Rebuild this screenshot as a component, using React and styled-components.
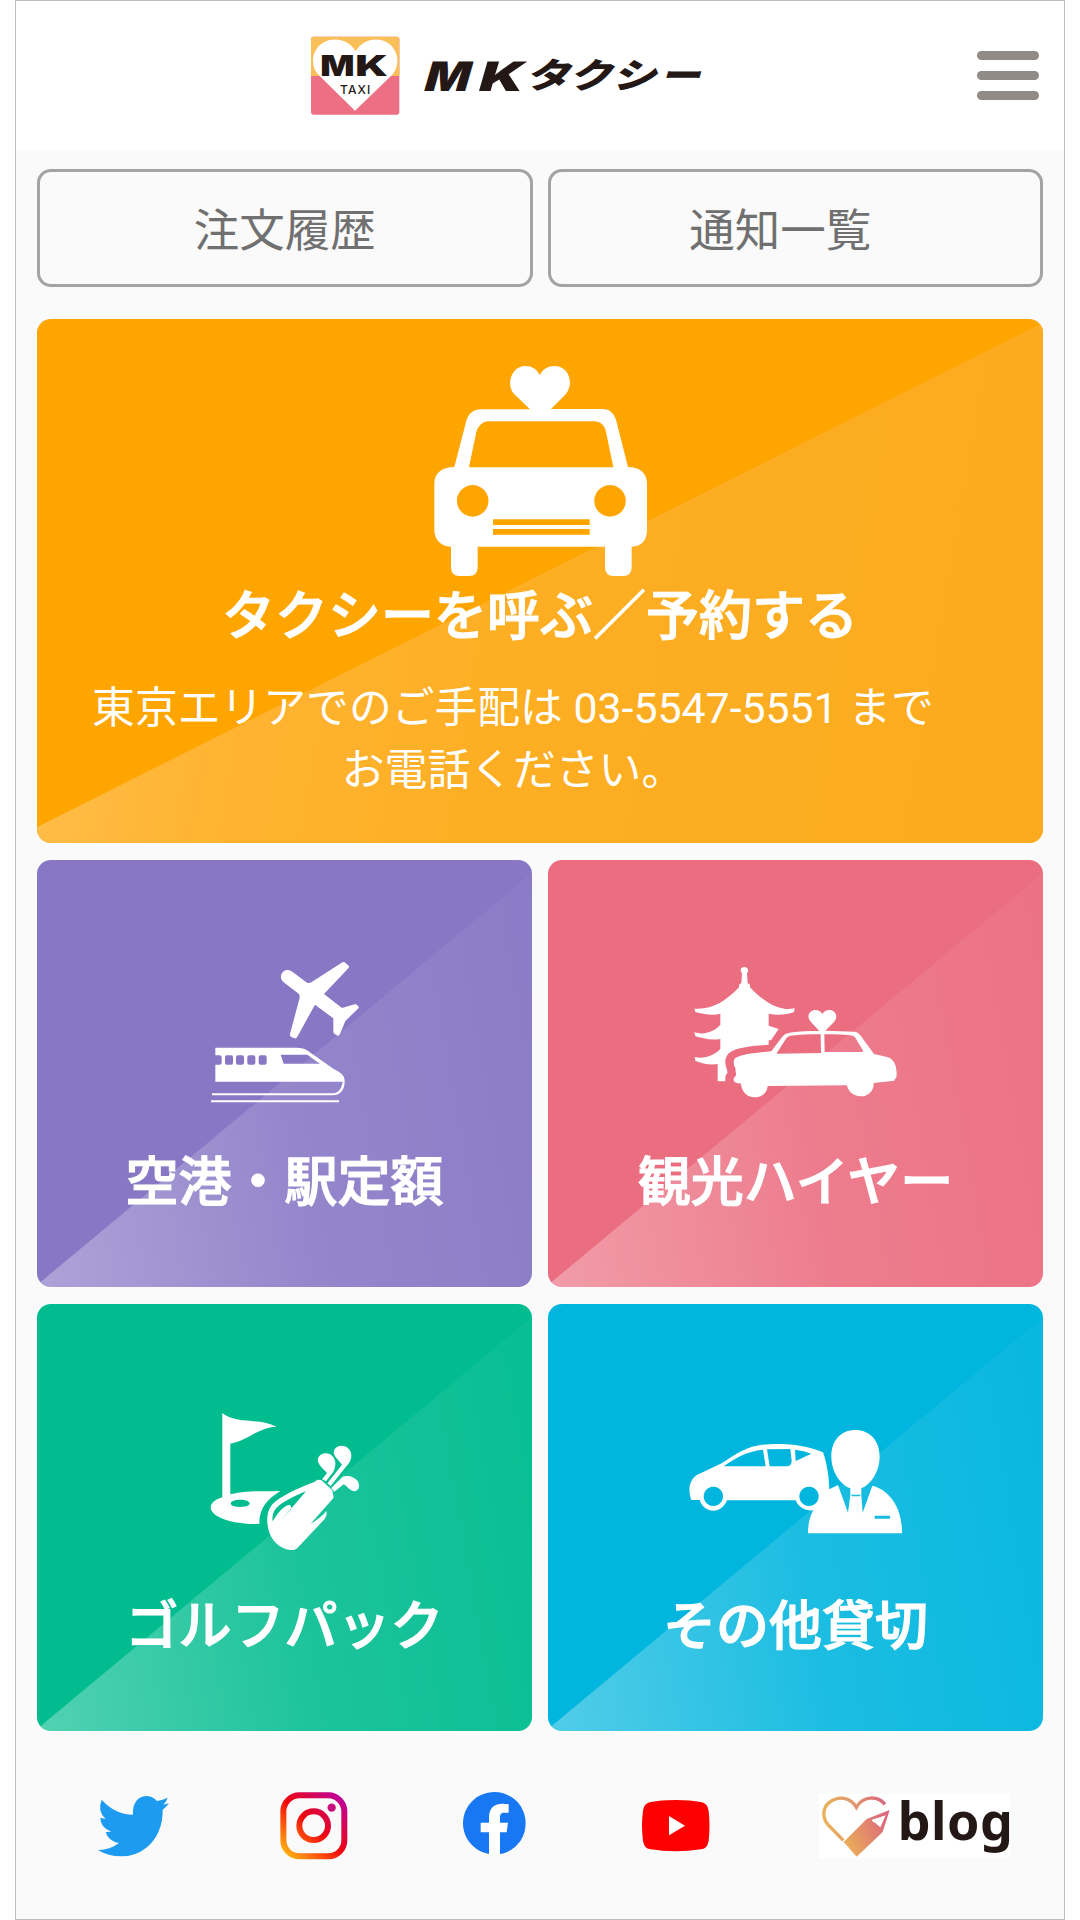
import React from 'react';
import styled, { createGlobalStyle } from 'styled-components';

const GlobalStyle = createGlobalStyle`
  * { box-sizing: border-box; }
  body {
    margin: 0;
    background: #fff;
    font-family: Roboto, "Noto Sans CJK JP", sans-serif;
  }
`;

const Screen = styled.div`
  width: 1050px;
  height: 1920px;
  margin-left: 15px;
  border: 1px solid #bdbdbd;
  background: #fafafa;
`;

const Header = styled.header`
  display: flex;
  align-items: center;
  height: 149px;
  padding: 0 25px 0 295px;
  background: #fff;
`;

const LogoLink = styled.a`
  display: flex;
  margin-right: auto;
`;

const MenuButton = styled.button`
  display: flex;
  flex-direction: column;
  gap: 11px;
  width: 62px;
  padding: 0;
  border: 0;
  background: none;
`;

const MenuBar = styled.span`
  height: 9px;
  border-radius: 5px;
  background: #918b88;
`;

const Shortcuts = styled.nav`
  display: grid;
  grid-template-columns: 1fr 1fr;
  gap: 15px;
  padding: 19px 21px 0;
`;

const ShortcutButton = styled.button`
  height: 118px;
  padding: 0 ${(p) => p.$inset || 0}px 3px 0;
  border: 3px solid #a3a3a3;
  border-radius: 14px;
  background: transparent;
  color: #707070;
  font-family: inherit;
  font-size: 45.5px;
  font-weight: 400;
`;

const Services = styled.main`
  display: grid;
  grid-template-columns: 1fr 1fr;
  gap: 17px 16px;
  padding: 32px 21px 0;
`;

const Card = styled.section`
  display: flex;
  flex-direction: column;
  align-items: center;
  border-radius: 14px;
  color: #fff;
  background: ${(p) => p.$color};
  isolation: isolate;
  position: relative;
  overflow: hidden;
`;

const FeatureCard = styled(Card)`
  grid-column: 1 / -1;
  height: 524px;
  padding-top: 46px;
`;

const ServiceCard = styled(Card)`
  height: 427px;
  padding-top: ${(p) => p.$top}px;
`;

const Shine = styled.span`
  position: absolute;
  inset: 0;
  z-index: -1;
  background: ${(p) => p.$fill};
  clip-path: polygon(${(p) => p.$edge}, 100% 100%, 0 100%);
`;

const FeatureTitle = styled.h1`
  margin: 1px 0 0;
  font-size: 53px;
  font-weight: 500;
  line-height: 78px;
  -webkit-text-stroke: 1.2px #fff;
`;

const FeatureNote = styled.p`
  width: 900px;
  margin: 21px 54px 0 0;
  font-size: 42.8px;
  line-height: 62px;
  text-align: center;
`;

const IconArea = styled.div`
  display: flex;
  align-items: center;
  justify-content: center;
  height: 185px;
`;

const CardLabel = styled.h2`
  margin: ${(p) => p.$pull}px 0 0;
  font-size: 53px;
  font-weight: 500;
  line-height: 114px;
  -webkit-text-stroke: 1.2px #fff;
`;

const Social = styled.footer`
  display: grid;
  grid-template-columns: 181px 180px 181px 181px 296px;
  align-items: center;
  justify-items: center;
  height: 66px;
  margin: 61px 0 0 27px;
`;

const SocialLink = styled.a`
  display: flex;
  padding-bottom: ${(p) => p.$lift || 0}px;
`;

const BlogLink = styled(SocialLink)`
  background: #fff;
`;

const Svg = styled.svg`
  display: block;
  overflow: visible;
`;

/* All drawings use three user units per pixel. */
function Drawing({ box, children }) {
  const [, , w, h] = box;
  return (
    <Svg viewBox={box.join(' ')} width={w / 3} height={h / 3} fill="#fff">
      {children}
    </Svg>
  );
}

/* Slanted letters of the word mark: character, left edge, baseline, size, drawn width. */
const wordmark = [
  { char: 'M', x: 396, y: 210, size: 122, width: 136, family: 'Inter, sans-serif' },
  { char: 'K', x: 559, y: 210, size: 122, width: 134, family: 'Inter, sans-serif' },
  { char: 'タ', x: 706, y: 203, size: 104, width: 136 },
  { char: 'ク', x: 836, y: 203, size: 104, width: 132 },
  { char: 'シ', x: 966, y: 203, size: 104, width: 134 },
  { char: 'ー', x: 1110, y: 203, size: 104, width: 120 },
];

const Logo = () => (
  <Drawing box={[63, 46, 1180, 238]}>
    <rect x="63" y="48" width="265" height="234" rx="8" fill="#ed6f83" />
    <path d="M63 166V56q0-8 8-8H320q8 0 8 8V166Z" fill="#f9c05a" />
    <path d="M195 270L86 163C60 135 64 88 98 67C132 46 178 58 197 92C216 58 260 46 294 67C326 88 332 135 306 163Z" />
    <g fill="#231815" fontFamily="Inter, sans-serif">
      <text x="91" y="166" fontSize="87" fontWeight="900" textLength="103" lengthAdjust="spacingAndGlyphs">M</text>
      <text x="196" y="166" fontSize="87" fontWeight="900" textLength="98" lengthAdjust="spacingAndGlyphs">K</text>
      <text x="150" y="219" fontSize="36" fontWeight="500" textLength="91">TAXI</text>
      {wordmark.map(({ char, x, y, size, width, family }) => (
        <text
          key={char}
          transform={`translate(${x} ${y}) skewX(-16)`}
          fontSize={size}
          fontWeight="900"
          fontFamily={family || "'Noto Sans CJK JP', sans-serif"}
          textLength={width}
          lengthAdjust="spacingAndGlyphs"
        >
          {char}
        </text>
      ))}
    </g>
  </Drawing>
);

const TaxiIcon = () => (
  <Drawing box={[42, 45, 639, 636]}>
    <path
      fillRule="evenodd"
      d="M330 178L283 133C267 117 266 86 281 66C300 40 345 42 359 76C375 42 420 40 440 66C455 88 452 115 437 133L393 177H548C572 177 583 193 589 213L624 351C660 351 681 370 681 401V540C681 570 665 590 635 590V652Q635 678 609 678H581Q555 678 555 652V590H173V652Q173 678 147 678H119Q93 678 93 652V590C60 590 43 565 43 540V401C43 370 65 351 103 351L138 216C144 193 158 178 184 178ZM147 352H580L558 246C554 225 541 214 522 214H207C188 214 174 228 169 246ZM158 405a47.500 47.500 0 1 0 .1 0ZM570 405a47.500 47.500 0 1 0 .1 0ZM219 508V525H509V508ZM219 537V554H509V537Z"
    />
  </Drawing>
);

const AirportIcon = () => (
  <Drawing box={[63, 67, 444, 422]}>
    <path d="M281 95C292 87 304 93 309 98L351 129Q357 132 364 128L455 69Q462 65 466 69L476 78Q479 82 475 86L402 163L456 205L494 194Q499 193 502 197L506 201Q507 205 503 208L466 244L450 283Q447 290 443 288L433 282Q430 280 430 275V236L375 195L322 291Q318 298 314 296L304 292Q299 290 300 283L328 178Q331 168 326 162L281 128C270 119 270 104 281 95Z" />
    <path
      fillRule="evenodd"
      d="M76 324H320C342 324 354 333 366 342L431 388Q464 402 464 422C465 447 454 467 429 467H66V461H427C445 461 456 445 458 426H76V375H89Q95 375 95 369V353Q95 347 89 347H76ZM272 345L281 372H390L352 345ZM110 347Q105 347 105 353V369Q105 375 110 375H124Q129 375 129 369V353Q129 347 124 347ZM144 347Q138 347 138 353V369Q138 375 144 375H156Q162 375 162 369V353Q162 347 156 347ZM178 347Q172 347 172 353V369Q172 375 178 375H190Q196 375 196 369V353Q196 347 190 347ZM212 347Q206 347 206 353V369Q206 375 212 375H225Q230 375 230 369V353Q230 347 225 347Z"
    />
    <path d="M353 335L405 373L431 391L415 389L348 341Z" />
    <path d="M63 482H447V488H63Z" />
  </Drawing>
);

const SightseeingIcon = () => (
  <Drawing box={[40, 50, 608, 392]}>
    <path d="M184 69C175 58 182 50 191 50C201 50 207 60 199 69L201 98L208 103V111C240 145 275 171 318 177L342 174L340 185C319 193 290 196 264 190V226L294 236L271 270H264V283C225 287 182 289 155 302C133 312 130 336 138 355L141 367C134 373 134 380 134 393H111V341C87 345 63 339 44 331L42 320C70 327 100 316 119 296V266C90 271 62 263 44 258L41 246C70 255 100 244 119 224V190C94 197 64 190 44 185L41 175C94 179 135 153 175 111V103L182 98Z" />
    <path
      fillRule="evenodd"
      d="M416 242L391 215C381 204 381 191 390 184C402 175 419 179 425 191C432 179 450 175 461 185C470 194 468 206 460 215L434 241L520 244Q532 245 539 255L580 311L619 320C639 325 648 344 648 372Q648 384 642 387L641 391L579 398C580 421 564 438 540 438C518 438 501 422 499 405L261 407C260 428 243 441 221 441C200 441 184 426 180 399C165 401 157 394 159 384L164 378Q168 374 165 365L164 352C159 346 157 333 163 324C185 310 232 307 272 303L306 258Q313 249 326 247C358 242 387 242 416 242ZM287 310L421 308L420 252C385 252 355 253 330 256Q322 257 317 264ZM431 252L432 305H543Q549 304 546 299L524 262Q520 256 510 255C484 252 459 251 431 252Z"
    />
  </Drawing>
);

const GolfIcon = () => (
  <Drawing box={[63, 69, 444, 411]}>
    <path
      fillRule="evenodd"
      d="M97 69C140 104 205 82 260 110C204 112 176 151 121 161V313C169 300 220 305 271 303C230 329 208 354 208 402C140 405 62 385 62 352C63 336 80 327 97 322ZM151 329C133 329 122 334 122 340C122 347 133 351 151 351C168 351 179 347 179 340C179 334 168 329 151 329Z"
    />
    <path
      fillRule="evenodd"
      d="M232 397C230 371 238 348 257 334C290 309 336 290 373 276L382 269L394 270L427 301L431 323L362 401C381 391 398 377 409 363Q412 377 404 387L325 471C315 483 304 481 287 477C257 468 233 435 232 397ZM348 304C313 318 266 339 252 364Q247 375 247 394C260 378 273 350 298 344Q305 346 304 357L274 390Z"
    />
    <path d="M396 268L411 249C400 237 379 221 384 205C390 188 415 184 427 198C441 214 437 232 429 247L408 274Z" />
    <path d="M412 280L456 224C443 206 425 194 433 179C441 165 465 163 477 178C492 195 480 219 469 229L422 288Z" />
    <path d="M424 294L458 260C475 254 494 261 503 273C512 289 506 301 494 304C479 303 474 290 461 283L433 305Z" />
  </Drawing>
);

const CharterIcon = () => (
  <Drawing box={[57, 59, 640, 310]}>
    <path
      fillRule="evenodd"
      d="M64 269C54 242 56 213 79 195L155 159C205 128 234 103 299 102C354 99 409 106 459 126C471 159 477 200 478 237L504 224L534 307L541 255V234C508 221 484 181 484 139C484 89 514 59 556 59C600 59 629 91 629 139C629 181 605 221 574 234V255L578 307L607 226C658 239 697 291 696 369H414Q414 328 430 300C407 303 385 291 377 270H171C163 291 146 301 130 301C109 301 95 287 89 269ZM161 168H287L279 118C229 123 197 143 161 168ZM299 168H352Q365 166 365 151L361 116L291 117ZM375 118L377 152L424 130Q402 121 375 118ZM130 229a29 29 0 1 0 .1 0ZM417 229a29 29 0 1 0 .1 0ZM543 253L546 258H569L573 253ZM614 316V325H660V316Z"
    />
  </Drawing>
);

const TwitterIcon = () => (
  <Drawing box={[55, 77, 213, 181]}>
    <path
      fill="#1d9bf0"
      d="M55 239Q89 240 118 218Q85 212 78 185L95 184Q62 172 62 142L78 146Q52 122 66 88Q105 132 160 133C158 98 174 77 203 77Q220 78 232 92Q250 89 264 82Q260 95 250 103L268 99Q260 110 249 118C250 165 233 205 200 232Q167 258 125 258Q85 258 55 239Z"
    />
  </Drawing>
);

const InstagramIcon = () => (
  <Drawing box={[602, 65, 202, 202]}>
    <defs>
      <linearGradient id="insta" gradientUnits="userSpaceOnUse" x1="620" y1="255" x2="785" y2="78">
        <stop offset="0" stopColor="#ffb414" />
        <stop offset=".3" stopColor="#fb4a0c" />
        <stop offset=".5" stopColor="#ee0611" />
        <stop offset=".72" stopColor="#d80548" />
        <stop offset="1" stopColor="#bf009b" />
      </linearGradient>
    </defs>
    <g fill="none" stroke="url(#insta)" strokeWidth="18">
      <rect x="612" y="75" width="183" height="183" rx="48" />
      <circle cx="703" cy="166" r="43" />
    </g>
    <circle cx="757" cy="112" r="12.500" fill="#c8107c" />
  </Drawing>
);

const FacebookIcon = () => (
  <Drawing box={[1150, 65, 188, 188]}>
    <path fill="#1877f2" d="M1228 251C1183 243 1150 205 1150 159C1150 107 1192 65 1244 65C1296 65 1338 107 1338 159C1338 205 1307 242 1262 251Z" />
    <path d="M1228 254V186H1203V157H1228V141C1228 111 1246 100 1268 100L1287 102V127H1273C1264 127 1261 133 1261 141V157H1285L1281 186H1261V254Z" />
  </Drawing>
);

const YouTubeIcon = () => (
  <Drawing box={[95, 89, 203, 154]}>
    <path fill="#f00" d="M196 89Q242 89 271 95C287 98 292 106 295 122Q300 165 295 211C292 227 287 234 271 237Q235 243 196 243Q157 243 122 237C106 234 101 227 98 211Q92 165 98 122C101 106 106 98 122 95Q150 89 196 89Z" />
    <path d="M176 137L224 166L176 195Z" />
  </Drawing>
);

const BlogLogo = () => (
  <Drawing box={[625, 71, 573, 191]}>
    <defs>
      <linearGradient id="heart" gradientUnits="userSpaceOnUse" x1="635" y1="130" x2="830" y2="90">
        <stop offset="0" stopColor="#e9b35a" />
        <stop offset=".45" stopColor="#e39a6c" />
        <stop offset="1" stopColor="#d8657f" />
      </linearGradient>
      <linearGradient id="pencil" gradientUnits="userSpaceOnUse" x1="700" y1="220" x2="830" y2="150">
        <stop offset="0" stopColor="#eaae58" />
        <stop offset="1" stopColor="#db667d" />
      </linearGradient>
    </defs>
    <path d="M698 210L653 164C635 146 634 113 656 96C684 75 719 80 737 111C756 76 801 75 823 102" fill="none" stroke="url(#heart)" strokeWidth="10" />
    <path fillRule="evenodd" d="M738 259L699 215L768 146L837 119L816 185ZM783 149L809 170L825 135Z" fill="url(#pencil)" />
    <path d="M783 149L788 156L797 155L800 163L809 170L821 140Z" />
    <text x="861" y="210" fontFamily="'Noto Sans', sans-serif" fontSize="156" fontWeight="700" textLength="346" lengthAdjust="spacing" fill="#231815">
      blog
    </text>
  </Drawing>
);

const services = [
  { label: '空港・駅定額', color: '#8777c5', Icon: AirportIcon, top: 80, pull: 1 },
  { label: '観光ハイヤー', color: '#eb6d80', Icon: SightseeingIcon, top: 80, pull: 1 },
  { label: 'ゴルフパック', color: '#00bc8f', Icon: GolfIcon, top: 85, pull: -4 },
  { label: 'その他貸切', color: '#00b5de', Icon: CharterIcon, top: 85, pull: -4 },
];

export default function App() {
  return (
    <>
      <GlobalStyle />
      <Screen>
        <Header>
          <LogoLink><Logo /></LogoLink>
          <MenuButton aria-label="menu">
            <MenuBar />
            <MenuBar />
            <MenuBar />
          </MenuButton>
        </Header>
        <Shortcuts>
          <ShortcutButton>注文履歴</ShortcutButton>
          <ShortcutButton $inset={30}>通知一覧</ShortcutButton>
        </Shortcuts>
        <Services>
          <FeatureCard $color="#ffa500">
            <Shine
              $edge="0 508px, 100% 4px"
              $fill="linear-gradient(100deg, #ffc252 0%, #ffb433 22%, #fdae22 50%, #fcab1e 100%)"
            />
            <TaxiIcon />
            <FeatureTitle>タクシーを呼ぶ／予約する</FeatureTitle>
            <FeatureNote>
              東京エリアでのご手配は 03-5547-5551 まで
              <br />
              お電話ください。
            </FeatureNote>
          </FeatureCard>
          {services.map(({ label, color, Icon, top, pull }) => (
            <ServiceCard key={label} $color={color} $top={top}>
              <Shine
                $edge="0 425px, 100% 13px"
                $fill="linear-gradient(80deg, rgba(255,255,255,.32) 0%, rgba(255,255,255,.11) 50%, rgba(255,255,255,.03) 100%)"
              />
              <IconArea><Icon /></IconArea>
              <CardLabel $pull={pull}>{label}</CardLabel>
            </ServiceCard>
          ))}
        </Services>
        <Social>
          <SocialLink><TwitterIcon /></SocialLink>
          <SocialLink><InstagramIcon /></SocialLink>
          <SocialLink $lift={5}><FacebookIcon /></SocialLink>
          <SocialLink><YouTubeIcon /></SocialLink>
          <BlogLink><BlogLogo /></BlogLink>
        </Social>
      </Screen>
    </>
  );
}
